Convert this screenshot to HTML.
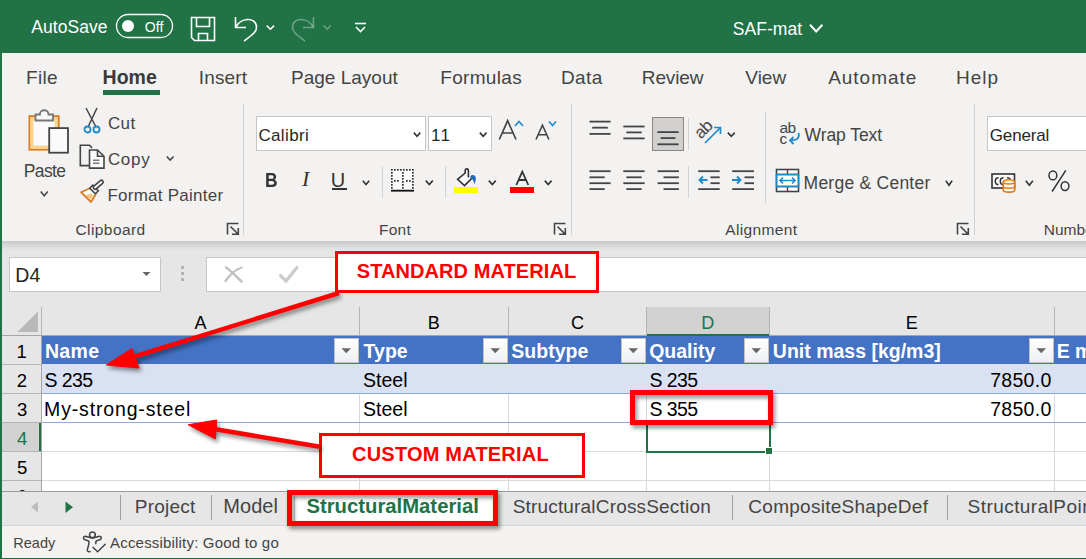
<!DOCTYPE html>
<html><head><meta charset="utf-8"><style>
html,body{margin:0;padding:0;}
body{width:1086px;height:559px;position:relative;overflow:hidden;background:#f3f2f1;font-family:"Liberation Sans",sans-serif;}
.t{position:absolute;white-space:nowrap;line-height:1;}
svg{overflow:visible}
</style></head><body>
<div style="position:absolute;left:0px;top:0px;width:1086px;height:53px;background:#217346"></div>
<div style="position:absolute;left:0px;top:53px;width:1086px;height:188px;background:#f3f2f1"></div>
<div style="position:absolute;left:0px;top:241px;width:1086px;height:250px;background:#e6e6e6"></div>
<div style="position:absolute;left:0px;top:241px;width:1086px;height:9px;background:linear-gradient(#c9c9c9,#e6e6e6)"></div>
<div class="t" style="left:31.27px;top:17px;line-height:20px;font-size:17.5px;font-weight:400;color:#fff;letter-spacing:0.061px;">AutoSave</div>
<svg style="position:absolute;left:115px;top:13px;" width="60" height="27" viewBox="0 0 60 27"><rect x="1.5" y="1.5" width="56" height="23" rx="11.5" fill="none" stroke="#fff" stroke-width="1.3"/><circle cx="13" cy="13" r="6" fill="#fff"/></svg>
<div class="t" style="left:144.84px;top:19px;line-height:16px;font-size:14px;font-weight:400;color:#fff;letter-spacing:0.103px;">Off</div>
<svg style="position:absolute;left:189px;top:15px;" width="28" height="28" viewBox="0 0 28 28"><g fill="none" stroke="#fff" stroke-width="1.6"><path d="M2.5,2.5 H25.5 V25.5 H5.5 L2.5,22.5 Z"/><path d="M7.5,2.5 V11.5 H20.5 V2.5"/><path d="M9.5,25.5 V18.5 H18.5 V25.5"/></g></svg>
<svg style="position:absolute;left:232px;top:15px;" width="28" height="28" viewBox="0 0 28 28"><g fill="none" stroke="#fff" stroke-width="1.6"><path d="M3.5,2 V12.5 H14"/><path d="M4,12 C8,3 24,1 24.5,12 C24.8,17 20,20 12,26"/></g></svg>
<svg style="position:absolute;left:264px;top:22.9px;" width="12.800000000000011" height="8.900000000000002" viewBox="0 0 12.800000000000011 8.900000000000002"><path d="M2.75,2.6 L6.400000000000006,6.225000000000002 L10.050000000000011,2.6" fill="none" stroke="#fff" stroke-width="1.5"/></svg>
<svg style="position:absolute;left:290px;top:15px;" width="28" height="28" viewBox="0 0 28 28"><g fill="none" stroke="rgba(255,255,255,0.35)" stroke-width="1.6"><path d="M23.5,2 V12.5 H13"/><path d="M23,12 C19,3 3,1 2.5,12 C2.2,17 7,20 15,26"/></g></svg>
<svg style="position:absolute;left:321px;top:22.9px;" width="12.399999999999977" height="8.900000000000002" viewBox="0 0 12.399999999999977 8.900000000000002"><path d="M2.75,2.6 L6.199999999999989,6.225000000000002 L9.649999999999977,2.6" fill="none" stroke="rgba(255,255,255,0.35)" stroke-width="1.5"/></svg>
<svg style="position:absolute;left:353px;top:21px;" width="15" height="13" viewBox="0 0 15 13"><g fill="none" stroke="#fff" stroke-width="1.6"><path d="M2,2.5 H13"/><path d="M3,6 L7.5,10.5 L12,6"/></g></svg>
<div class="t" style="left:732.81px;top:19px;line-height:20px;font-size:17.5px;font-weight:400;color:#fff;letter-spacing:0.029px;">SAF-mat</div>
<svg style="position:absolute;left:807px;top:22.3px;" width="18.399999999999977" height="12.400000000000002" viewBox="0 0 18.399999999999977 12.400000000000002"><path d="M3.0,2.8 L9.199999999999989,9.500000000000002 L15.399999999999977,2.8" fill="none" stroke="#fff" stroke-width="2"/></svg>
<div class="t" style="left:26.04px;top:67px;line-height:21px;font-size:19px;font-weight:400;color:#444444;letter-spacing:0.295px;">File</div>
<div class="t" style="left:198.75px;top:67px;line-height:21px;font-size:19px;font-weight:400;color:#444444;letter-spacing:0.172px;">Insert</div>
<div class="t" style="left:291.04px;top:67px;line-height:21px;font-size:19px;font-weight:400;color:#444444;letter-spacing:-0.001px;">Page Layout</div>
<div class="t" style="left:440.24px;top:67px;line-height:21px;font-size:19px;font-weight:400;color:#444444;letter-spacing:0.321px;">Formulas</div>
<div class="t" style="left:561.04px;top:67px;line-height:21px;font-size:19px;font-weight:400;color:#444444;letter-spacing:0.343px;">Data</div>
<div class="t" style="left:641.84px;top:67px;line-height:21px;font-size:19px;font-weight:400;color:#444444;letter-spacing:-0.140px;">Review</div>
<div class="t" style="left:745.32px;top:67px;line-height:21px;font-size:19px;font-weight:400;color:#444444;letter-spacing:-0.004px;">View</div>
<div class="t" style="left:828.16px;top:67px;line-height:21px;font-size:19px;font-weight:400;color:#444444;letter-spacing:0.979px;">Automate</div>
<div class="t" style="left:955.94px;top:67px;line-height:21px;font-size:19px;font-weight:400;color:#444444;letter-spacing:1.024px;">Help</div>
<div class="t" style="left:102.59px;top:66px;line-height:22px;font-size:19.5px;font-weight:700;color:#3a3a3a;letter-spacing:0.000px;">Home</div>
<div style="position:absolute;left:103px;top:90px;width:57px;height:4.5px;background:#217346"></div>
<svg style="position:absolute;left:24px;top:106px;" width="48" height="52" viewBox="0 0 48 52">
<rect x="5.5" y="10.2" width="29.1" height="33.4" fill="#fafafa" stroke="#d97b1f" stroke-width="2"/>
<rect x="8" y="12.7" width="24.1" height="28.4" fill="none" stroke="#fbd38a" stroke-width="3"/>
<path d="M11.5,14.5 V8.5 H15.9 C15.9,2.8 24.5,2.8 24.5,8.5 H29 V14.5 Z" fill="#f7f7f7" stroke="#777" stroke-width="1.8"/>
<rect x="25.2" y="22.1" width="18.8" height="24.6" fill="#fafafa" stroke="#444" stroke-width="1.8"/>
</svg>
<div class="t" style="left:23.87px;top:161px;line-height:20px;font-size:17.5px;font-weight:400;color:#444444;letter-spacing:-0.686px;">Paste</div>
<svg style="position:absolute;left:37.9px;top:188.9px;" width="12.5" height="9.5" viewBox="0 0 12.5 9.5"><path d="M2.75,2.6 L6.25,6.825 L9.75,2.6" fill="none" stroke="#444444" stroke-width="1.5"/></svg>
<svg style="position:absolute;left:82px;top:107px;" width="22" height="28" viewBox="0 0 22 28">
<path d="M4,1 L14,20 M15,1 L6,20" stroke="#444" stroke-width="1.5" fill="none"/>
<circle cx="5.5" cy="22.5" r="3" fill="none" stroke="#1e8bcd" stroke-width="1.8"/>
<circle cx="14.5" cy="22.5" r="3" fill="none" stroke="#1e8bcd" stroke-width="1.8"/>
</svg>
<div class="t" style="left:107.93px;top:114px;line-height:19px;font-size:17px;font-weight:400;color:#444444;letter-spacing:0.367px;">Cut</div>
<svg style="position:absolute;left:78px;top:143px;" width="28" height="28" viewBox="0 0 28 28">
<g fill="none" stroke="#444" stroke-width="1.6">
<path d="M11,22.6 H2.3 V2.3 H11.4 L14,4.9"/>
<path d="M11.5,7 H19.5 L26,13.3 V25.1 H11.5 Z" fill="#fafafa"/>
<path d="M19.5,7 V13.3 H26"/>
<path d="M15,17.2 H21.4 M15,20.3 H21.4" stroke="#777"/>
</g></svg>
<div class="t" style="left:107.93px;top:150px;line-height:19px;font-size:17px;font-weight:400;color:#444444;letter-spacing:0.674px;">Copy</div>
<svg style="position:absolute;left:163.6px;top:153.8px;" width="12.300000000000011" height="8.799999999999983" viewBox="0 0 12.300000000000011 8.799999999999983"><path d="M2.75,2.6 L6.150000000000006,6.124999999999983 L9.550000000000011,2.6" fill="none" stroke="#444444" stroke-width="1.5"/></svg>
<svg style="position:absolute;left:79px;top:179px;" width="28" height="28" viewBox="0 0 28 28">
<path d="M2,13.2 L11.5,9 L16.8,15 L12,23 Z" fill="#fff" stroke="#d97b1f" stroke-width="1.8" stroke-linejoin="round"/>
<path d="M6.5,16.2 L12.5,14.5 L14.2,16.5 L11.5,20.5 Z" fill="#fbc27a"/>
<path d="M10.8,9.2 L13.8,6.2 L19.3,11.7 L16.3,14.7 Z" fill="#fafafa" stroke="#444" stroke-width="1.6"/>
<path d="M16,8.5 L22.5,3" stroke="#444" stroke-width="5" stroke-linecap="round"/>
<path d="M16,8.5 L22.5,3" stroke="#fafafa" stroke-width="1.8" stroke-linecap="round"/>
</svg>
<div class="t" style="left:107.41px;top:186px;line-height:19px;font-size:17px;font-weight:400;color:#444444;letter-spacing:0.250px;">Format Painter</div>
<div class="t" style="left:75.41px;top:221px;line-height:17px;font-size:15.5px;font-weight:400;color:#444444;letter-spacing:0.430px;">Clipboard</div>
<svg style="position:absolute;left:225.5px;top:222px;" width="14" height="14" viewBox="0 0 14 14"><g fill="none" stroke="#444" stroke-width="1.6"><path d="M1.5,12.5 V1.5 H12.5"/><path d="M4.5,4.5 L12,12 M6,12.3 H12.3 V6"/></g></svg>
<div style="position:absolute;left:243px;top:104px;width:1px;height:131px;background:#d2d2d2"></div>
<div style="position:absolute;left:256px;top:116px;width:170px;height:35px;background:#fff;box-sizing:border-box;border:1px solid #c6c6c6"></div>
<div style="position:absolute;left:428px;top:116px;width:64px;height:35px;background:#fff;box-sizing:border-box;border:1px solid #c6c6c6"></div>
<div class="t" style="left:258.43px;top:126px;line-height:19px;font-size:17px;font-weight:400;color:#262626;letter-spacing:0.355px;">Calibri</div>
<div class="t" style="left:430.91px;top:126px;line-height:19px;font-size:17px;font-weight:400;color:#262626;letter-spacing:1.462px;">11</div>
<svg style="position:absolute;left:411.4px;top:129.8px;" width="12.100000000000023" height="9.0" viewBox="0 0 12.100000000000023 9.0"><path d="M2.8,2.64 L6.050000000000011,6.28 L9.300000000000022,2.64" fill="none" stroke="#333" stroke-width="1.6"/></svg>
<svg style="position:absolute;left:477px;top:129.8px;" width="12.300000000000011" height="9.0" viewBox="0 0 12.300000000000011 9.0"><path d="M2.8,2.64 L6.150000000000006,6.28 L9.50000000000001,2.64" fill="none" stroke="#333" stroke-width="1.6"/></svg>
<svg style="position:absolute;left:497px;top:119px;" width="22" height="23" viewBox="0 0 22 23"><path d="M2.3,20.5 L10.65,1.7 L19,20.5 M5.3,14 H16" fill="none" stroke="#444" stroke-width="1.7"/></svg>
<svg style="position:absolute;left:513px;top:119px;" width="12" height="9" viewBox="0 0 12 9"><path d="M2,7 L6,2.5 L10,7" fill="none" stroke="#1e8bcd" stroke-width="1.6"/></svg>
<svg style="position:absolute;left:534px;top:124px;" width="17" height="17" viewBox="0 0 17 17"><path d="M2,15.5 L8.45,1.2 L14.9,15.5 M4.4,10.7 H12.5" fill="none" stroke="#444" stroke-width="1.6"/></svg>
<svg style="position:absolute;left:547px;top:119px;" width="11" height="9" viewBox="0 0 11 9"><path d="M2,2.5 L5.5,6.5 L9,2.5" fill="none" stroke="#1e8bcd" stroke-width="1.6"/></svg>
<div class="t" style="left:265.39px;top:168px;line-height:23px;font-size:21px;font-weight:700;color:#333;letter-spacing:0.000px;transform:scaleX(0.83);transform-origin:0 0">B</div>
<div class="t" style="left:302px;top:168px;font-family:'Liberation Serif',serif;font-style:italic;font-size:22px;color:#333">I</div>
<div class="t" style="left:330.76px;top:169px;line-height:22px;font-size:20px;font-weight:400;color:#333;letter-spacing:0.000px;">U</div>
<div style="position:absolute;left:332px;top:188px;width:14.5px;height:1.8px;background:#333"></div>
<svg style="position:absolute;left:360.2px;top:177.8px;" width="12.0" height="9.299999999999983" viewBox="0 0 12.0 9.299999999999983"><path d="M2.8,2.64 L6.0,6.579999999999983 L9.2,2.64" fill="none" stroke="#333" stroke-width="1.6"/></svg>
<div style="position:absolute;left:382px;top:166px;width:1px;height:32px;background:#d2d2d2"></div>
<svg style="position:absolute;left:385px;top:162px;" width="32" height="32" viewBox="0 0 32 32"><rect x="7" y="8" width="20" height="19" fill="#fafafa"/><g fill="#333"><rect x="6" y="7" width="1.7" height="1.7"/><rect x="9" y="7" width="1.7" height="1.7"/><rect x="12" y="7" width="1.7" height="1.7"/><rect x="15" y="7" width="1.7" height="1.7"/><rect x="18" y="7" width="1.7" height="1.7"/><rect x="21" y="7" width="1.7" height="1.7"/><rect x="24" y="7" width="1.7" height="1.7"/><rect x="27" y="7" width="1.7" height="1.7"/><rect x="6" y="10" width="1.7" height="1.7"/><rect x="27" y="10" width="1.7" height="1.7"/><rect x="6" y="13" width="1.7" height="1.7"/><rect x="27" y="13" width="1.7" height="1.7"/><rect x="6" y="16" width="1.7" height="1.7"/><rect x="27" y="16" width="1.7" height="1.7"/><rect x="6" y="19" width="1.7" height="1.7"/><rect x="27" y="19" width="1.7" height="1.7"/><rect x="6" y="22" width="1.7" height="1.7"/><rect x="27" y="22" width="1.7" height="1.7"/><rect x="6" y="25" width="1.7" height="1.7"/><rect x="27" y="25" width="1.7" height="1.7"/><rect x="17" y="10" width="1.7" height="1.7"/><rect x="17" y="13" width="1.7" height="1.7"/><rect x="17" y="16" width="1.7" height="1.7"/><rect x="17" y="19" width="1.7" height="1.7"/><rect x="17" y="22" width="1.7" height="1.7"/><rect x="17" y="25" width="1.7" height="1.7"/><rect x="9" y="18" width="1.7" height="1.7"/><rect x="12" y="18" width="1.7" height="1.7"/><rect x="21" y="18" width="1.7" height="1.7"/><rect x="24" y="18" width="1.7" height="1.7"/></g><path d="M6,28.7 H29" stroke="#111" stroke-width="1.8"/></svg>
<svg style="position:absolute;left:423px;top:177.8px;" width="12.600000000000023" height="9.299999999999983" viewBox="0 0 12.600000000000023 9.299999999999983"><path d="M2.8,2.64 L6.300000000000011,6.579999999999983 L9.800000000000022,2.64" fill="none" stroke="#333" stroke-width="1.6"/></svg>
<div style="position:absolute;left:445px;top:166px;width:1px;height:32px;background:#d2d2d2"></div>
<svg style="position:absolute;left:450px;top:162px;" width="32" height="34" viewBox="0 0 32 34"><path d="M15.2,11 L7.6,17.3 L14.5,23.6 L22.6,15.6 L21,14.2" fill="#fafafa" stroke="#333" stroke-width="1.6" stroke-linejoin="miter"/>
<path d="M15.2,11.5 V8.7 C15.2,6.2 18.4,6.2 18.4,8.7 V15.5" fill="none" stroke="#333" stroke-width="1.6"/>
<path d="M20.5,14 C23,11.8 26.5,13.8 25.8,17.5 C25.5,19.5 24.8,20.5 24.4,22.5 C23.8,19.5 23,17.2 20.5,15.8 Z" fill="#1f66c4"/></svg>
<div style="position:absolute;left:453.8px;top:186.6px;width:24.3px;height:6.4px;background:#ffff00"></div>
<svg style="position:absolute;left:486px;top:177.8px;" width="12.600000000000023" height="9.299999999999983" viewBox="0 0 12.600000000000023 9.299999999999983"><path d="M2.8,2.64 L6.300000000000011,6.579999999999983 L9.800000000000022,2.64" fill="none" stroke="#333" stroke-width="1.6"/></svg>
<svg style="position:absolute;left:513px;top:168px;" width="19" height="19" viewBox="0 0 19 19"><path d="M3.3,17 L9.3,3.6 L15.3,17 M5.6,12 H13" fill="none" stroke="#333" stroke-width="1.8"/></svg>
<div style="position:absolute;left:510px;top:187px;width:24.2px;height:6.2px;background:#ff0000"></div>
<svg style="position:absolute;left:542px;top:177.8px;" width="12.399999999999977" height="9.299999999999983" viewBox="0 0 12.399999999999977 9.299999999999983"><path d="M2.8,2.64 L6.199999999999989,6.579999999999983 L9.599999999999977,2.64" fill="none" stroke="#333" stroke-width="1.6"/></svg>
<div class="t" style="left:379.03px;top:221px;line-height:17px;font-size:15.5px;font-weight:400;color:#444444;letter-spacing:0.221px;">Font</div>
<svg style="position:absolute;left:552.7px;top:222px;" width="14" height="14" viewBox="0 0 14 14"><g fill="none" stroke="#444" stroke-width="1.6"><path d="M1.5,12.5 V1.5 H12.5"/><path d="M4.5,4.5 L12,12 M6,12.3 H12.3 V6"/></g></svg>
<div style="position:absolute;left:571px;top:104px;width:1px;height:131px;background:#d2d2d2"></div>
<svg style="position:absolute;left:0px;top:0px;" width="1086" height="250" viewBox="0 0 1086 250"><g stroke="#444" stroke-width="1.8" fill="none"><path d="M589.5,121.6 H610.6" /><path d="M592.2,127.7 H607.8" /><path d="M589.5,133.9 H610.6" /></g></svg>
<svg style="position:absolute;left:0px;top:0px;" width="1086" height="250" viewBox="0 0 1086 250"><g stroke="#444" stroke-width="1.8" fill="none"><path d="M623.3,126.5 H644.6" /><path d="M626.3,132.4 H641.7" /><path d="M623.3,138.4 H644.6" /></g></svg>
<div style="position:absolute;left:652px;top:117px;width:32px;height:34px;background:#d2d0ce;box-sizing:border-box;border:1px solid #8a8886"></div>
<svg style="position:absolute;left:0px;top:0px;" width="1086" height="250" viewBox="0 0 1086 250"><g stroke="#444" stroke-width="1.8" fill="none"><path d="M657.4,132.1 H678.6" /><path d="M660.7,138.1 H675.4" /><path d="M657.4,144.3 H678.6" /></g></svg>
<div style="position:absolute;left:688px;top:118px;width:1px;height:32px;background:#d2d2d2"></div>
<svg style="position:absolute;left:694px;top:118px;" width="30" height="30" viewBox="0 0 30 30"><text x="0" y="0" transform="translate(7,21.5) rotate(-45)" font-family="Liberation Sans" font-size="17" letter-spacing="-0.5" fill="#444">ab</text>
<path d="M11,25 L26.5,9.5 M20,9.5 H26.5 V16" fill="none" stroke="#1e8bcd" stroke-width="1.7"/></svg>
<svg style="position:absolute;left:725.2px;top:130px;" width="12.5" height="9" viewBox="0 0 12.5 9"><path d="M2.8,2.64 L6.25,6.28 L9.7,2.64" fill="none" stroke="#333" stroke-width="1.6"/></svg>
<svg style="position:absolute;left:0px;top:0px;" width="1086" height="250" viewBox="0 0 1086 250"><g stroke="#444" stroke-width="1.8" fill="none"><path d="M589.5,171.2 H610.6" /><path d="M589.5,177.3 H604.7" /><path d="M589.5,183.2 H610.6" /><path d="M589.5,189.1 H604.7" /></g></svg>
<svg style="position:absolute;left:0px;top:0px;" width="1086" height="250" viewBox="0 0 1086 250"><g stroke="#444" stroke-width="1.8" fill="none"><path d="M623.3,171.2 H644.6" /><path d="M626.3,177.3 H641.7" /><path d="M623.3,183.2 H644.6" /><path d="M626.3,189.1 H641.7" /></g></svg>
<svg style="position:absolute;left:0px;top:0px;" width="1086" height="250" viewBox="0 0 1086 250"><g stroke="#444" stroke-width="1.8" fill="none"><path d="M657.6,171.2 H678.9" /><path d="M663.5,177.3 H678.9" /><path d="M657.6,183.2 H678.9" /><path d="M663.5,189.1 H678.9" /></g></svg>
<div style="position:absolute;left:688px;top:166px;width:1px;height:32px;background:#d2d2d2"></div>
<svg style="position:absolute;left:0px;top:0px;" width="1086" height="250" viewBox="0 0 1086 250"><g stroke="#444" stroke-width="1.8" fill="none"><path d="M698.2,171.2 H719.7" /><path d="M698.2,189.1 H719.7" /></g></svg>
<svg style="position:absolute;left:0px;top:0px;" width="1086" height="250" viewBox="0 0 1086 250"><g stroke="#444" stroke-width="1.8" fill="none"><path d="M710.5,177.3 H719.7" /><path d="M710.5,183.2 H719.7" /></g></svg>
<svg style="position:absolute;left:0px;top:0px;" width="1086" height="250" viewBox="0 0 1086 250"><g stroke="#444" stroke-width="1.8" fill="none"><path d="M732.2,171.2 H754" /><path d="M732.2,189.1 H754" /></g></svg>
<svg style="position:absolute;left:0px;top:0px;" width="1086" height="250" viewBox="0 0 1086 250"><g stroke="#444" stroke-width="1.8" fill="none"><path d="M744.5,177.3 H754" /><path d="M744.5,183.2 H754" /></g></svg>
<svg style="position:absolute;left:696px;top:174px;" width="14" height="12" viewBox="0 0 14 12"><path d="M11.5,6 H3.5 M7,2.5 L3.5,6 L7,9.5" fill="none" stroke="#1e8bcd" stroke-width="1.9"/></svg>
<svg style="position:absolute;left:730px;top:174px;" width="14" height="12" viewBox="0 0 14 12"><path d="M2,6 H10.5 M7,2.5 L10.5,6 L7,9.5" fill="none" stroke="#1e8bcd" stroke-width="1.9"/></svg>
<div style="position:absolute;left:765px;top:112px;width:1px;height:91px;background:#d2d2d2"></div>
<svg style="position:absolute;left:777px;top:118px;" width="26" height="28" viewBox="0 0 26 28"><text x="2.5" y="14.5" font-family="Liberation Sans" font-size="15.5" letter-spacing="-0.6" fill="#444">ab</text>
<text x="2.5" y="25.5" font-family="Liberation Sans" font-size="15.5" fill="#444">c</text>
<path d="M21.5,15 C23,20 20,22.5 13,22.5 M16.5,19 L13,22.5 L16.5,26" fill="none" stroke="#1e8bcd" stroke-width="1.8"/></svg>
<div class="t" style="left:804.53px;top:125px;line-height:20px;font-size:17.5px;font-weight:400;color:#444444;letter-spacing:-0.068px;">Wrap Text</div>
<svg style="position:absolute;left:775px;top:168px;" width="26" height="25" viewBox="0 0 26 25"><rect x="1.5" y="1.5" width="22" height="22" fill="#fff" stroke="#444" stroke-width="1.6"/>
<path d="M1.5,6.5 H23.5 M1.5,18.5 H23.5 M12.5,1.5 V6.5 M12.5,18.5 V23.5" stroke="#444" stroke-width="1.4"/>
<rect x="1.5" y="6.5" width="22" height="12" fill="none" stroke="#1e8bcd" stroke-width="1.6"/>
<path d="M5,12.5 H20 M8,9.5 L5,12.5 L8,15.5 M17,9.5 L20,12.5 L17,15.5" fill="none" stroke="#1e8bcd" stroke-width="1.6"/></svg>
<div class="t" style="left:803.57px;top:173px;line-height:20px;font-size:17.5px;font-weight:400;color:#444444;letter-spacing:0.245px;">Merge & Center</div>
<svg style="position:absolute;left:943.4px;top:177.7px;" width="12.0" height="10.0" viewBox="0 0 12.0 10.0"><path d="M2.8,2.64 L6.0,7.28 L9.2,2.64" fill="none" stroke="#333" stroke-width="1.6"/></svg>
<div class="t" style="left:725.27px;top:221px;line-height:17px;font-size:15.5px;font-weight:400;color:#444444;letter-spacing:0.364px;">Alignment</div>
<svg style="position:absolute;left:955.7px;top:221.8px;" width="14" height="14" viewBox="0 0 14 14"><g fill="none" stroke="#444" stroke-width="1.6"><path d="M1.5,12.5 V1.5 H12.5"/><path d="M4.5,4.5 L12,12 M6,12.3 H12.3 V6"/></g></svg>
<div style="position:absolute;left:974px;top:104px;width:1px;height:131px;background:#d2d2d2"></div>
<div style="position:absolute;left:987px;top:116px;width:110px;height:35px;background:#fff;box-sizing:border-box;border:1px solid #c6c6c6"></div>
<div class="t" style="left:989.75px;top:126px;line-height:19px;font-size:17px;font-weight:400;color:#262626;letter-spacing:-0.149px;">General</div>
<svg style="position:absolute;left:989px;top:171px;" width="30" height="24" viewBox="0 0 30 24"><rect x="3" y="3" width="22.5" height="14" fill="#fafafa" stroke="#333" stroke-width="1.6"/>
<path d="M9.5,6.8 C7,6.8 6.3,8 6.3,10.2 C6.3,12.4 7,13.6 9.5,13.6 M14.5,6.8 C12,6.8 11.3,8 11.3,10.2 C11.3,12.4 12,13.6 14.5,13.6 M18,6.8 C20.5,6.8 21.2,8 21.2,9" fill="none" stroke="#333" stroke-width="1.5"/>
<path d="M14.3,11 C14.3,8.2 25.7,8.2 25.7,11 V19 C25.7,21.8 14.3,21.8 14.3,19 Z" fill="#fafafa" stroke="#e07a1a" stroke-width="1.7"/>
<path d="M14.3,11 C14.3,13.6 25.7,13.6 25.7,11 M14.3,15.2 C14.3,17.8 25.7,17.8 25.7,15.2" fill="none" stroke="#e07a1a" stroke-width="1.5"/>
<path d="M16,10.5 C17,9.5 23,9.5 24,10.5" stroke="#f8d26b" stroke-width="1.2" fill="none"/></svg>
<svg style="position:absolute;left:1023px;top:177.7px;" width="12.700000000000045" height="10.0" viewBox="0 0 12.700000000000045 10.0"><path d="M2.8,2.64 L6.350000000000023,7.28 L9.900000000000045,2.64" fill="none" stroke="#333" stroke-width="1.6"/></svg>
<svg style="position:absolute;left:1046px;top:169px;" width="26" height="25" viewBox="0 0 26 25"><g fill="none" stroke="#333" stroke-width="1.5"><ellipse cx="6.9" cy="6.4" rx="3.9" ry="4.4"/><ellipse cx="19" cy="17.1" rx="3.9" ry="4.4"/><path d="M19.8,1.4 L6.1,22.5"/></g></svg>
<div class="t" style="left:1043.73px;top:221px;line-height:17px;font-size:15.5px;font-weight:400;color:#444444;letter-spacing:0.000px;">Number</div>
<div style="position:absolute;left:9px;top:257px;width:152px;height:35px;background:#fff;box-sizing:border-box;border:1px solid #c6c6c6"></div>
<div class="t" style="left:15.30px;top:264px;line-height:22px;font-size:19.5px;font-weight:400;color:#262626;letter-spacing:0.000px;">D4</div>
<svg style="position:absolute;left:141px;top:270px;" width="11" height="8" viewBox="0 0 11 8"><path d="M1.5,2 H9.5 L5.5,6 Z" fill="#666"/></svg>
<div style="position:absolute;left:181px;top:266px;width:3px;height:3px;background:#b3b3b3"></div>
<div style="position:absolute;left:181px;top:272px;width:3px;height:3px;background:#b3b3b3"></div>
<div style="position:absolute;left:181px;top:278px;width:3px;height:3px;background:#b3b3b3"></div>
<div style="position:absolute;left:206px;top:257px;width:880px;height:35px;background:#fff;box-sizing:border-box;border:1px solid #c6c6c6;border-right:none"></div>
<svg style="position:absolute;left:215px;top:260px;" width="90" height="30" viewBox="0 0 90 30"><g fill="none" stroke-linecap="round"><path d="M11,7.5 C15,10 21,16 26.5,21.5" stroke="#c2c2c2" stroke-width="2.6"/><path d="M26.5,7.5 C20,10 14,16 10.5,21" stroke="#c2c2c2" stroke-width="2.4"/><path d="M65.5,15.5 L71,21 L82,7.5" stroke="#cbcbcb" stroke-width="3.2"/></g></svg>
<div style="position:absolute;left:42px;top:307px;width:1044px;height:28px;background:#e6e6e6"></div>
<div style="position:absolute;left:647px;top:307px;width:122px;height:27px;background:#d2d2d2"></div>
<div style="position:absolute;left:647px;top:334px;width:122px;height:2px;background:#217346"></div>
<div style="position:absolute;left:41px;top:307px;width:1px;height:28px;background:#b4b4b4"></div>
<div style="position:absolute;left:359px;top:307px;width:1px;height:28px;background:#b4b4b4"></div>
<div style="position:absolute;left:508px;top:307px;width:1px;height:28px;background:#b4b4b4"></div>
<div style="position:absolute;left:646px;top:307px;width:1px;height:28px;background:#b4b4b4"></div>
<div style="position:absolute;left:769px;top:307px;width:1px;height:28px;background:#b4b4b4"></div>
<div style="position:absolute;left:1054px;top:307px;width:1px;height:28px;background:#b4b4b4"></div>
<div style="position:absolute;left:2px;top:335px;width:1084px;height:1px;background:#a6a6a6"></div>
<div style="position:absolute;left:647px;top:334px;width:122px;height:2px;background:#217346"></div>
<svg style="position:absolute;left:15px;top:309px;" width="25" height="25" viewBox="0 0 25 25"><path d="M23,2.5 V23 H2.5 Z" fill="#b8b8b8"/></svg>
<div style="position:absolute;left:2px;top:336px;width:39px;height:155px;background:#e6e6e6"></div>
<div style="position:absolute;left:2px;top:422px;width:39px;height:29px;background:#d2d2d2"></div>
<div style="position:absolute;left:2px;top:364px;width:39px;height:1px;background:#b4b4b4"></div>
<div style="position:absolute;left:2px;top:393px;width:39px;height:1px;background:#b4b4b4"></div>
<div style="position:absolute;left:2px;top:422px;width:39px;height:1px;background:#b4b4b4"></div>
<div style="position:absolute;left:2px;top:451px;width:39px;height:1px;background:#b4b4b4"></div>
<div style="position:absolute;left:2px;top:480px;width:39px;height:1px;background:#b4b4b4"></div>
<div style="position:absolute;left:41px;top:336px;width:1px;height:155px;background:#a6a6a6"></div>
<div style="position:absolute;left:39px;top:423px;width:2px;height:28px;background:#217346"></div>
<div style="position:absolute;left:42px;top:336px;width:1044px;height:155px;background:#fff"></div>
<div style="position:absolute;left:359px;top:336px;width:1px;height:155px;background:#d9d9d9"></div>
<div style="position:absolute;left:508px;top:336px;width:1px;height:155px;background:#d9d9d9"></div>
<div style="position:absolute;left:646px;top:336px;width:1px;height:155px;background:#d9d9d9"></div>
<div style="position:absolute;left:769px;top:336px;width:1px;height:155px;background:#d9d9d9"></div>
<div style="position:absolute;left:1054px;top:336px;width:1px;height:155px;background:#d9d9d9"></div>
<div style="position:absolute;left:42px;top:364px;width:1044px;height:1px;background:#d9d9d9"></div>
<div style="position:absolute;left:42px;top:393px;width:1044px;height:1px;background:#d9d9d9"></div>
<div style="position:absolute;left:42px;top:422px;width:1044px;height:1px;background:#d9d9d9"></div>
<div style="position:absolute;left:42px;top:451px;width:1044px;height:1px;background:#d9d9d9"></div>
<div style="position:absolute;left:42px;top:480px;width:1044px;height:1px;background:#d9d9d9"></div>
<div style="position:absolute;left:42px;top:336px;width:1044px;height:28px;background:#4472c4"></div>
<div style="position:absolute;left:42px;top:364px;width:1044px;height:29px;background:#d9e1f2"></div>
<div style="position:absolute;left:42px;top:393px;width:1044px;height:1px;background:#8ea9db"></div>
<div style="position:absolute;left:42px;top:422px;width:1044px;height:1px;background:#8ea9db"></div>
<div style="position:absolute;left:334px;top:338px;width:25px;height:25px;background:linear-gradient(#fff,#eef0f4);box-sizing:border-box;border:1px solid #c4c0bc"></div>
<svg style="position:absolute;left:341px;top:348px;" width="11" height="7" viewBox="0 0 11 7"><path d="M0.5,0.3 H10 L5.25,5.2 Z" fill="#666"/></svg>
<div style="position:absolute;left:483px;top:338px;width:25px;height:25px;background:linear-gradient(#fff,#eef0f4);box-sizing:border-box;border:1px solid #c4c0bc"></div>
<svg style="position:absolute;left:490px;top:348px;" width="11" height="7" viewBox="0 0 11 7"><path d="M0.5,0.3 H10 L5.25,5.2 Z" fill="#666"/></svg>
<div style="position:absolute;left:621px;top:338px;width:25px;height:25px;background:linear-gradient(#fff,#eef0f4);box-sizing:border-box;border:1px solid #c4c0bc"></div>
<svg style="position:absolute;left:628px;top:348px;" width="11" height="7" viewBox="0 0 11 7"><path d="M0.5,0.3 H10 L5.25,5.2 Z" fill="#666"/></svg>
<div style="position:absolute;left:744px;top:338px;width:25px;height:25px;background:linear-gradient(#fff,#eef0f4);box-sizing:border-box;border:1px solid #c4c0bc"></div>
<svg style="position:absolute;left:751px;top:348px;" width="11" height="7" viewBox="0 0 11 7"><path d="M0.5,0.3 H10 L5.25,5.2 Z" fill="#666"/></svg>
<div style="position:absolute;left:1029px;top:338px;width:25px;height:25px;background:linear-gradient(#fff,#eef0f4);box-sizing:border-box;border:1px solid #c4c0bc"></div>
<svg style="position:absolute;left:1036px;top:348px;" width="11" height="7" viewBox="0 0 11 7"><path d="M0.5,0.3 H10 L5.25,5.2 Z" fill="#666"/></svg>
<div class="t" style="left:194.50px;top:313px;line-height:20px;font-size:18px;font-weight:400;color:#000;letter-spacing:0.000px;">A</div>
<div class="t" style="left:427.73px;top:313px;line-height:20px;font-size:18px;font-weight:400;color:#000;letter-spacing:0.000px;">B</div>
<div class="t" style="left:570.88px;top:313px;line-height:20px;font-size:18px;font-weight:400;color:#000;letter-spacing:0.000px;">C</div>
<div class="t" style="left:701.19px;top:313px;line-height:20px;font-size:18px;font-weight:400;color:#217346;letter-spacing:0.000px;">D</div>
<div class="t" style="left:905.65px;top:313px;line-height:20px;font-size:18px;font-weight:400;color:#000;letter-spacing:0.000px;">E</div>
<div class="t" style="left:16.60px;top:341px;line-height:21px;font-size:18.5px;font-weight:400;color:#000;letter-spacing:0.000px;">1</div>
<div class="t" style="left:16.86px;top:370px;line-height:21px;font-size:18.5px;font-weight:400;color:#000;letter-spacing:0.000px;">2</div>
<div class="t" style="left:16.91px;top:399px;line-height:21px;font-size:18.5px;font-weight:400;color:#000;letter-spacing:0.000px;">3</div>
<div class="t" style="left:16.91px;top:428px;line-height:21px;font-size:18.5px;font-weight:400;color:#217346;letter-spacing:0.000px;">4</div>
<div class="t" style="left:16.88px;top:457px;line-height:21px;font-size:18.5px;font-weight:400;color:#000;letter-spacing:0.000px;">5</div>
<div class="t" style="left:16.79px;top:486px;line-height:21px;font-size:18.5px;font-weight:400;color:#000;letter-spacing:0.000px;">6</div>
<div class="t" style="left:44.89px;top:340px;line-height:22px;font-size:19.5px;font-weight:700;color:#fff;letter-spacing:0.357px;">Name</div>
<div class="t" style="left:363.59px;top:340px;line-height:22px;font-size:19.5px;font-weight:700;color:#fff;letter-spacing:0.000px;">Type</div>
<div class="t" style="left:511.33px;top:340px;line-height:22px;font-size:19.5px;font-weight:700;color:#fff;letter-spacing:0.000px;">Subtype</div>
<div class="t" style="left:649.20px;top:340px;line-height:22px;font-size:19.5px;font-weight:700;color:#fff;letter-spacing:0.000px;">Quality</div>
<div class="t" style="left:772.83px;top:340px;line-height:22px;font-size:19.5px;font-weight:700;color:#fff;letter-spacing:0.000px;">Unit mass [kg/m3]</div>
<div class="t" style="left:1056.69px;top:340px;line-height:22px;font-size:19.5px;font-weight:700;color:#fff;letter-spacing:0.000px;">E m</div>
<div class="t" style="left:44.52px;top:369px;line-height:22px;font-size:19.5px;font-weight:400;color:#000;letter-spacing:-0.564px;">S 235</div>
<div class="t" style="left:362.92px;top:369px;line-height:22px;font-size:19.5px;font-weight:400;color:#000;letter-spacing:0.031px;">Steel</div>
<div class="t" style="left:649.42px;top:369px;line-height:22px;font-size:19.5px;font-weight:400;color:#000;letter-spacing:-0.564px;">S 235</div>
<div class="t" style="left:990.21px;top:369px;line-height:22px;font-size:19.5px;font-weight:400;color:#000;letter-spacing:0.285px;">7850.0</div>
<div class="t" style="left:44.10px;top:398px;line-height:22px;font-size:19.5px;font-weight:400;color:#000;letter-spacing:0.844px;">My-strong-steel</div>
<div class="t" style="left:362.92px;top:398px;line-height:22px;font-size:19.5px;font-weight:400;color:#000;letter-spacing:0.031px;">Steel</div>
<div class="t" style="left:649.42px;top:398px;line-height:22px;font-size:19.5px;font-weight:400;color:#000;letter-spacing:-0.564px;">S 355</div>
<div class="t" style="left:990.21px;top:398px;line-height:22px;font-size:19.5px;font-weight:400;color:#000;letter-spacing:0.285px;">7850.0</div>
<div style="position:absolute;left:646px;top:422px;width:125px;height:31px;box-sizing:border-box;border:2px solid #217346"></div>
<div style="position:absolute;left:765px;top:447px;width:8px;height:8px;background:#fff"></div>
<div style="position:absolute;left:766px;top:448px;width:6px;height:6px;background:#217346"></div>
<div style="position:absolute;left:2px;top:491px;width:1084px;height:34px;background:#e6e6e6"></div>
<div style="position:absolute;left:2px;top:491px;width:1084px;height:1px;background:#9a9a9a"></div>
<div style="position:absolute;left:2px;top:524.5px;width:1084px;height:1px;background:#d4d4d4"></div>
<svg style="position:absolute;left:29px;top:500px;" width="12" height="15" viewBox="0 0 12 15"><path d="M9,1.5 V12.5 L2,7 Z" fill="#bdbdbd"/></svg>
<svg style="position:absolute;left:64px;top:500px;" width="12" height="15" viewBox="0 0 12 15"><path d="M1.5,1.5 V13 L9,7.25 Z" fill="#217346"/></svg>
<div style="position:absolute;left:120px;top:495px;width:1px;height:25px;background:#a0a0a0"></div>
<div style="position:absolute;left:211px;top:495px;width:1px;height:25px;background:#a0a0a0"></div>
<div style="position:absolute;left:732px;top:495px;width:1px;height:25px;background:#a0a0a0"></div>
<div style="position:absolute;left:946.5px;top:495px;width:1px;height:25px;background:#a0a0a0"></div>
<div class="t" style="left:134.74px;top:496px;line-height:21px;font-size:19px;font-weight:400;color:#444444;letter-spacing:0.241px;">Project</div>
<div class="t" style="left:223.36px;top:495px;line-height:22px;font-size:20px;font-weight:400;color:#444444;letter-spacing:0.000px;">Model</div>
<div style="position:absolute;left:290px;top:491px;width:205px;height:32px;background:#fff"></div>
<div style="position:absolute;left:294px;top:494px;width:1px;height:28px;background:#c8c8c8"></div>
<div class="t" style="left:306.41px;top:495px;line-height:22px;font-size:20.3px;font-weight:700;color:#217346;letter-spacing:0.000px;">StructuralMaterial</div>
<div class="t" style="left:512.64px;top:496px;line-height:21px;font-size:19px;font-weight:400;color:#444444;letter-spacing:0.181px;">StructuralCrossSection</div>
<div class="t" style="left:748.33px;top:496px;line-height:21px;font-size:19px;font-weight:400;color:#444444;letter-spacing:0.269px;">CompositeShapeDef</div>
<div class="t" style="left:967.54px;top:496px;line-height:21px;font-size:19px;font-weight:400;color:#444444;letter-spacing:0.450px;">StructuralPoint</div>
<div style="position:absolute;left:2px;top:525px;width:1084px;height:32px;background:#f3f2f1"></div>
<div style="position:absolute;left:2px;top:525px;width:1084px;height:1px;background:#d6d6d6"></div>
<div class="t" style="left:13.21px;top:535px;line-height:16px;font-size:14.5px;font-weight:400;color:#444444;letter-spacing:0.025px;">Ready</div>
<svg style="position:absolute;left:78px;top:526px;" width="30" height="30" viewBox="0 0 30 30"><g fill="none" stroke="#444" stroke-width="1.5" stroke-linecap="round">
<circle cx="14.4" cy="8.8" r="2.9"/>
<path d="M14.4,11.9 C12,12 9,10.3 7.2,10.3 C4.8,10.5 4.8,13.6 7.5,14 C9.5,14.5 11.2,14.2 11,16.5 C10.8,19 10.2,21 9.5,23 C8.8,25 10.2,26.3 12,25.6"/>
<path d="M14.4,11.9 C16.8,12 19.8,10.3 21.6,10.3 C24,10.5 24,13.6 21.3,14 C19.3,14.5 17.6,14.2 17.8,16.5 V17.8"/>
<path d="M15,21.3 L19.6,25.8 L27.3,18.2"/>
</g></svg>
<div class="t" style="left:110.07px;top:534px;line-height:17px;font-size:15px;font-weight:400;color:#444444;letter-spacing:0.184px;">Accessibility: Good to go</div>
<div style="position:absolute;left:0px;top:52px;width:2px;height:507px;background:#217346"></div>
<div style="position:absolute;left:0px;top:558px;width:1086px;height:1px;background:#1a6b3c"></div>
<div style="position:absolute;left:334.5px;top:250.5px;width:264px;height:42.5px;background:#fff;box-sizing:border-box;border:3px solid #ff0000"></div>
<div class="t" style="left:356.72px;top:260px;line-height:22px;font-size:20px;font-weight:700;color:#ff0000;letter-spacing:0.080px;">STANDARD MATERIAL</div>
<div style="position:absolute;left:318.5px;top:432.5px;width:266.5px;height:45px;background:#fff;box-sizing:border-box;border:3px solid #ff0000"></div>
<div class="t" style="left:352.08px;top:443px;line-height:22px;font-size:20px;font-weight:700;color:#ff0000;letter-spacing:0.203px;">CUSTOM MATERIAL</div>
<div style="position:absolute;left:630px;top:390.3px;width:143.3px;height:34.4px;box-sizing:border-box;border:5px solid #ff0000;filter:drop-shadow(2px 3px 2px rgba(0,0,0,0.45))"></div>
<div style="position:absolute;left:286.6px;top:489.7px;width:211.8px;height:35.9px;box-sizing:border-box;border:5px solid #ff0000;filter:drop-shadow(2px 3px 2px rgba(0,0,0,0.45))"></div>
<svg style="position:absolute;left:0px;top:0px;filter:drop-shadow(2px 3px 2px rgba(0,0,0,0.45))" width="1086" height="559" viewBox="0 0 1086 559"><g fill="#ff0000" stroke="#ff0000">
<path d="M339,293 L133,357" stroke-width="4.5"/>
<path d="M106.3,365 L131.9,348.5 L139,368 Z" stroke-width="1"/>
<path d="M320,446.8 L214,429" stroke-width="4.5"/>
<path d="M188.1,424.7 L216.8,420 L215.4,439 Z" stroke-width="1"/>
</g></svg>
</body></html>
